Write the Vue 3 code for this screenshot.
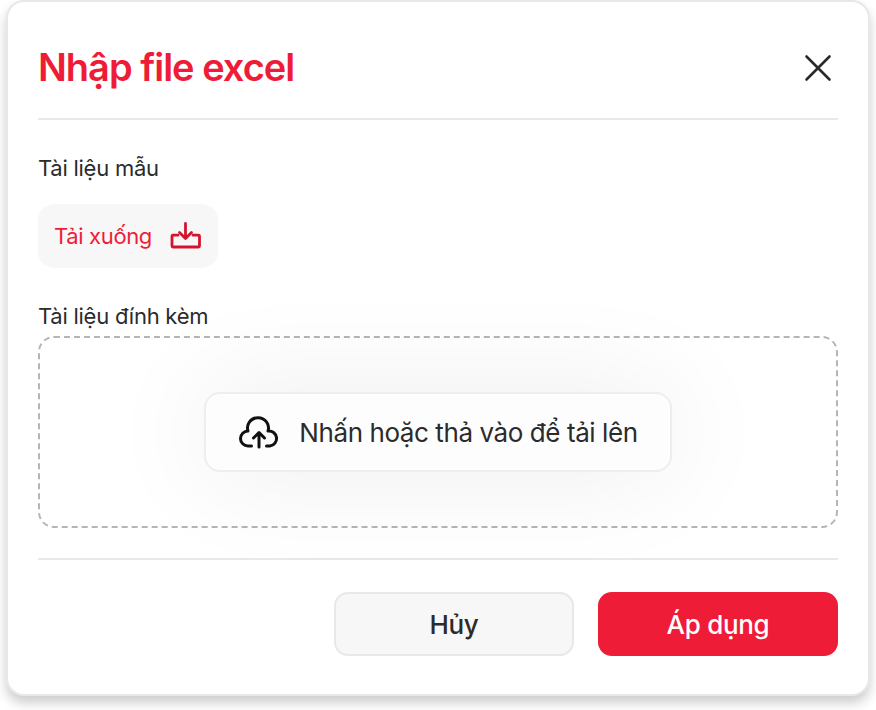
<template>
  <div class="page">
    <div class="card">
      <header class="head">
        <h1 class="title">Nhập file excel</h1>
        <button class="close" aria-label="Đóng">
          <svg width="32" height="32" viewBox="0 0 32 32" fill="none" stroke="#2b2b2b" stroke-width="2.6" stroke-linecap="round">
            <path d="M4.500 5.500 27.500 28.500M27.500 5.500 4.500 28.500" />
          </svg>
        </button>
      </header>
      <section class="sample">
        <div class="label">Tài liệu mẫu</div>
        <button class="download">
          <span class="dl-text">Tải xuống</span>
          <svg class="dl-icon" width="32" height="32" viewBox="0 0 32 32" fill="none" stroke="#d3142f" stroke-width="2.800" stroke-linecap="round" stroke-linejoin="round">
            <path d="M15.500 3.500V18M9.500 12.500l6 6 6-6" />
            <path d="M8 15.200H3a1 1 0 0 0-1 1V26a1 1 0 0 0 1 1h25.500a1 1 0 0 0 1-1v-9.800a1 1 0 0 0-1-1H23" />
          </svg>
        </button>
      </section>
      <section class="attach">
        <div class="label">Tài liệu đính kèm</div>
        <div class="drop">
          <button class="upload">
            <svg width="42" height="36" viewBox="0 0 42 36" fill="none" stroke="#111" stroke-width="3" stroke-linecap="round" stroke-linejoin="round">
              <path d="M13.500 32H10A7.500 7.500 0 0 1 10 17A10.500 10.200 0 1 1 30 17A7.500 7.500 0 0 1 32 32H28.500" />
              <path d="M21 33V18.500M15.500 24l5.500-5.500 5.500 5.500" />
            </svg>
            <span>Nhấn hoặc thả vào để tải lên</span>
          </button>
        </div>
      </section>
      <footer class="foot">
        <button class="btn cancel">Hủy</button>
        <button class="btn apply">Áp dụng</button>
      </footer>
    </div>
  </div>
</template>

<script setup>
</script>

<style>
html, body { margin: 0; background: #fff; }
</style>

<style scoped>
.page {
  width: 876px;
  height: 710px;
  box-sizing: border-box;
  padding: 0 6px;
  font-family: Inter, "Noto Sans", sans-serif;
  overflow: hidden;
}
.card {
  box-sizing: border-box;
  width: 864px;
  height: 696px;
  background: #fff;
  border: 2px solid #e8e8e8;
  border-radius: 18px;
  padding: 0 30px;
  box-shadow: 0 7px 12px rgba(0, 0, 0, 0.2);
}
button { font-family: inherit; cursor: pointer; }
.head {
  height: 118px;
  box-sizing: border-box;
  padding-top: 14px;
  border-bottom: 2px solid #e8e8e8;
  display: flex;
  align-items: center;
  justify-content: space-between;
}
.title {
  margin: 0;
  font-size: 38px;
  font-weight: 600;
  letter-spacing: -1px;
  color: #ef1c37;
}
.close {
  padding: 0;
  background: none;
  border: none;
  width: 32px;
  height: 32px;
  margin-right: 4px;
}
.label {
  font-size: 22px;
  font-weight: 430;
  line-height: 28px;
  color: #2b2b2b;
  letter-spacing: -0.25px;
}
.sample { padding-top: 34px; }
.download {
  margin-top: 22px;
  width: 180px;
  height: 64px;
  box-sizing: border-box;
  display: flex;
  align-items: center;
  justify-content: space-between;
  padding: 0 16px;
  background: #f7f7f7;
  border: none;
  border-radius: 16px;
  color: #ef1c37;
  font-size: 22px;
  font-weight: 430;
  letter-spacing: -0.35px;
}
.dl-text { white-space: nowrap; }
.dl-icon { flex: none; }
.attach { padding-top: 34px; }
.drop {
  margin-top: 6px;
  box-sizing: border-box;
  height: 192px;
  border: 2px dashed #b5b5b5;
  border-radius: 16px;
  display: flex;
  align-items: center;
  justify-content: center;
}
.upload {
  width: 468px;
  height: 80px;
  box-sizing: border-box;
  background: #fdfdfd;
  border: 2px solid #eee;
  border-radius: 16px;
  display: flex;
  align-items: center;
  justify-content: center;
  gap: 19px;
  font-size: 26px;
  font-weight: 430;
  letter-spacing: -0.42px;
  color: #2b2b2b;
  box-shadow: 0 0 110px rgba(0, 0, 0, 0.08);
}
.foot {
  margin-top: 30px;
  border-top: 2px solid #e8e8e8;
  padding-top: 32px;
  display: flex;
  justify-content: flex-end;
  gap: 24px;
}
.btn {
  width: 240px;
  height: 64px;
  box-sizing: border-box;
  border-radius: 14px;
  font-size: 26px;
  font-weight: 480;
  letter-spacing: -0.3px;
}
.cancel {
  background: #f7f7f7;
  border: 2px solid #e8e8e8;
  color: #2b2b2b;
}
.apply {
  background: #ef1c37;
  border: none;
  color: #fff;
}
</style>
